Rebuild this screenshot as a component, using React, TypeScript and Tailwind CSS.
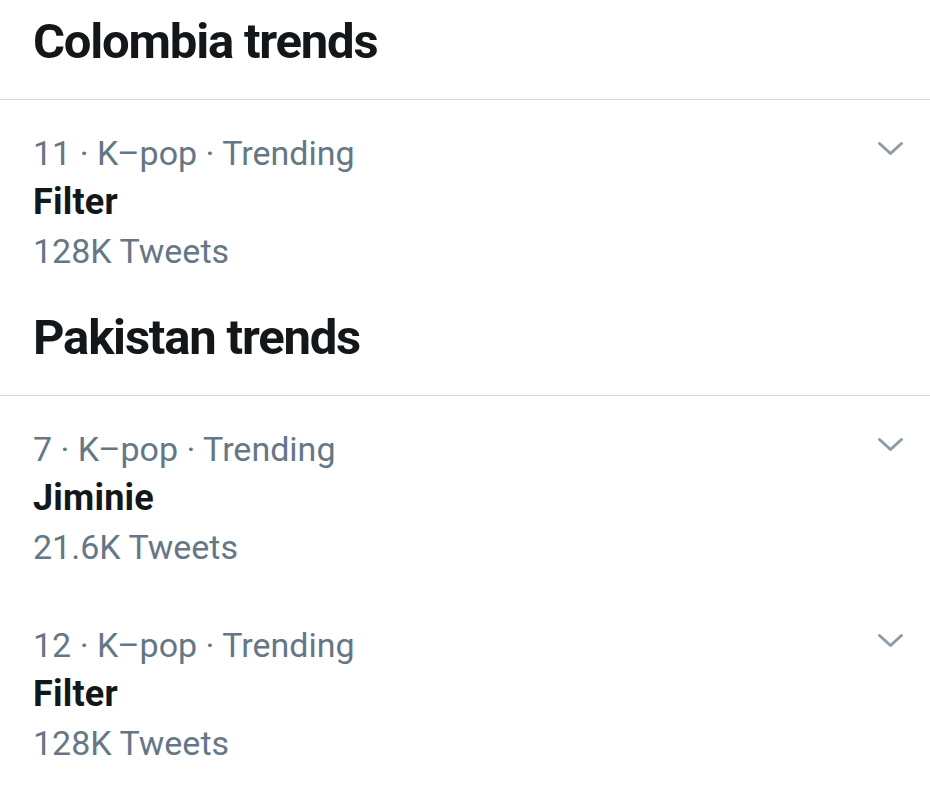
import { ReactElement } from 'react';

interface trendProps {
  rank: number;
  category: string;
  name: string;
  tweets: string;
}

interface sectionProps {
  title: string;
  trends: Array<trendProps>;
}

const sections: Array<sectionProps> = [
  {
    title: 'Colombia trends',
    trends: [{ rank: 11, category: 'K–pop', name: 'Filter', tweets: '128K Tweets' }],
  },
  {
    title: 'Pakistan trends',
    trends: [
      { rank: 7, category: 'K–pop', name: 'Jiminie', tweets: '21.6K Tweets' },
      { rank: 12, category: 'K–pop', name: 'Filter', tweets: '128K Tweets' },
    ],
  },
];

function Caret(): ReactElement {
  return (
    <svg width="27" height="15" viewBox="0 0 27 15" fill="none" className="mt-[12px] shrink-0">
      <polyline
        points="2.5,2.5 13.5,12.5 24.5,2.5"
        stroke="#8d9ba8"
        strokeWidth="3"
        strokeLinecap="round"
        strokeLinejoin="round"
      />
    </svg>
  );
}

function TrendItem({ trend }: { trend: trendProps }): ReactElement {
  return (
    <div className="flex items-start justify-between pl-[33px] pr-[26px] pt-[29px] pb-[20px]">
      <div className="flex flex-col">
        <p className="text-[34px] leading-[49px] text-[#657786]">
          {trend.rank} · {trend.category} · Trending
        </p>
        <p className="text-[36px] leading-[49px] font-bold text-[#14171a] tracking-[0.2px]">{trend.name}</p>
        <p className="text-[34px] leading-[49px] text-[#657786]">{trend.tweets}</p>
      </div>
      <Caret />
    </div>
  );
}

export default function App(): ReactElement {
  return (
    <div className="w-[930px] h-[794px] overflow-hidden bg-white" style={{ fontFamily: 'Roboto, "Liberation Sans", sans-serif' }}>
      {sections.map((section) => (
        <div key={section.title}>
          <div className="pl-[33px] pt-[12px] pb-[27px] border-b-[1.5px] border-[#d3d6d8]">
            <h2 className="text-[49px] leading-[60px] font-bold text-[#14171a] tracking-[-1.2px]">
              {section.title}
            </h2>
          </div>
          {section.trends.map((trend) => (
            <TrendItem key={trend.rank} trend={trend} />
          ))}
        </div>
      ))}
    </div>
  );
}
